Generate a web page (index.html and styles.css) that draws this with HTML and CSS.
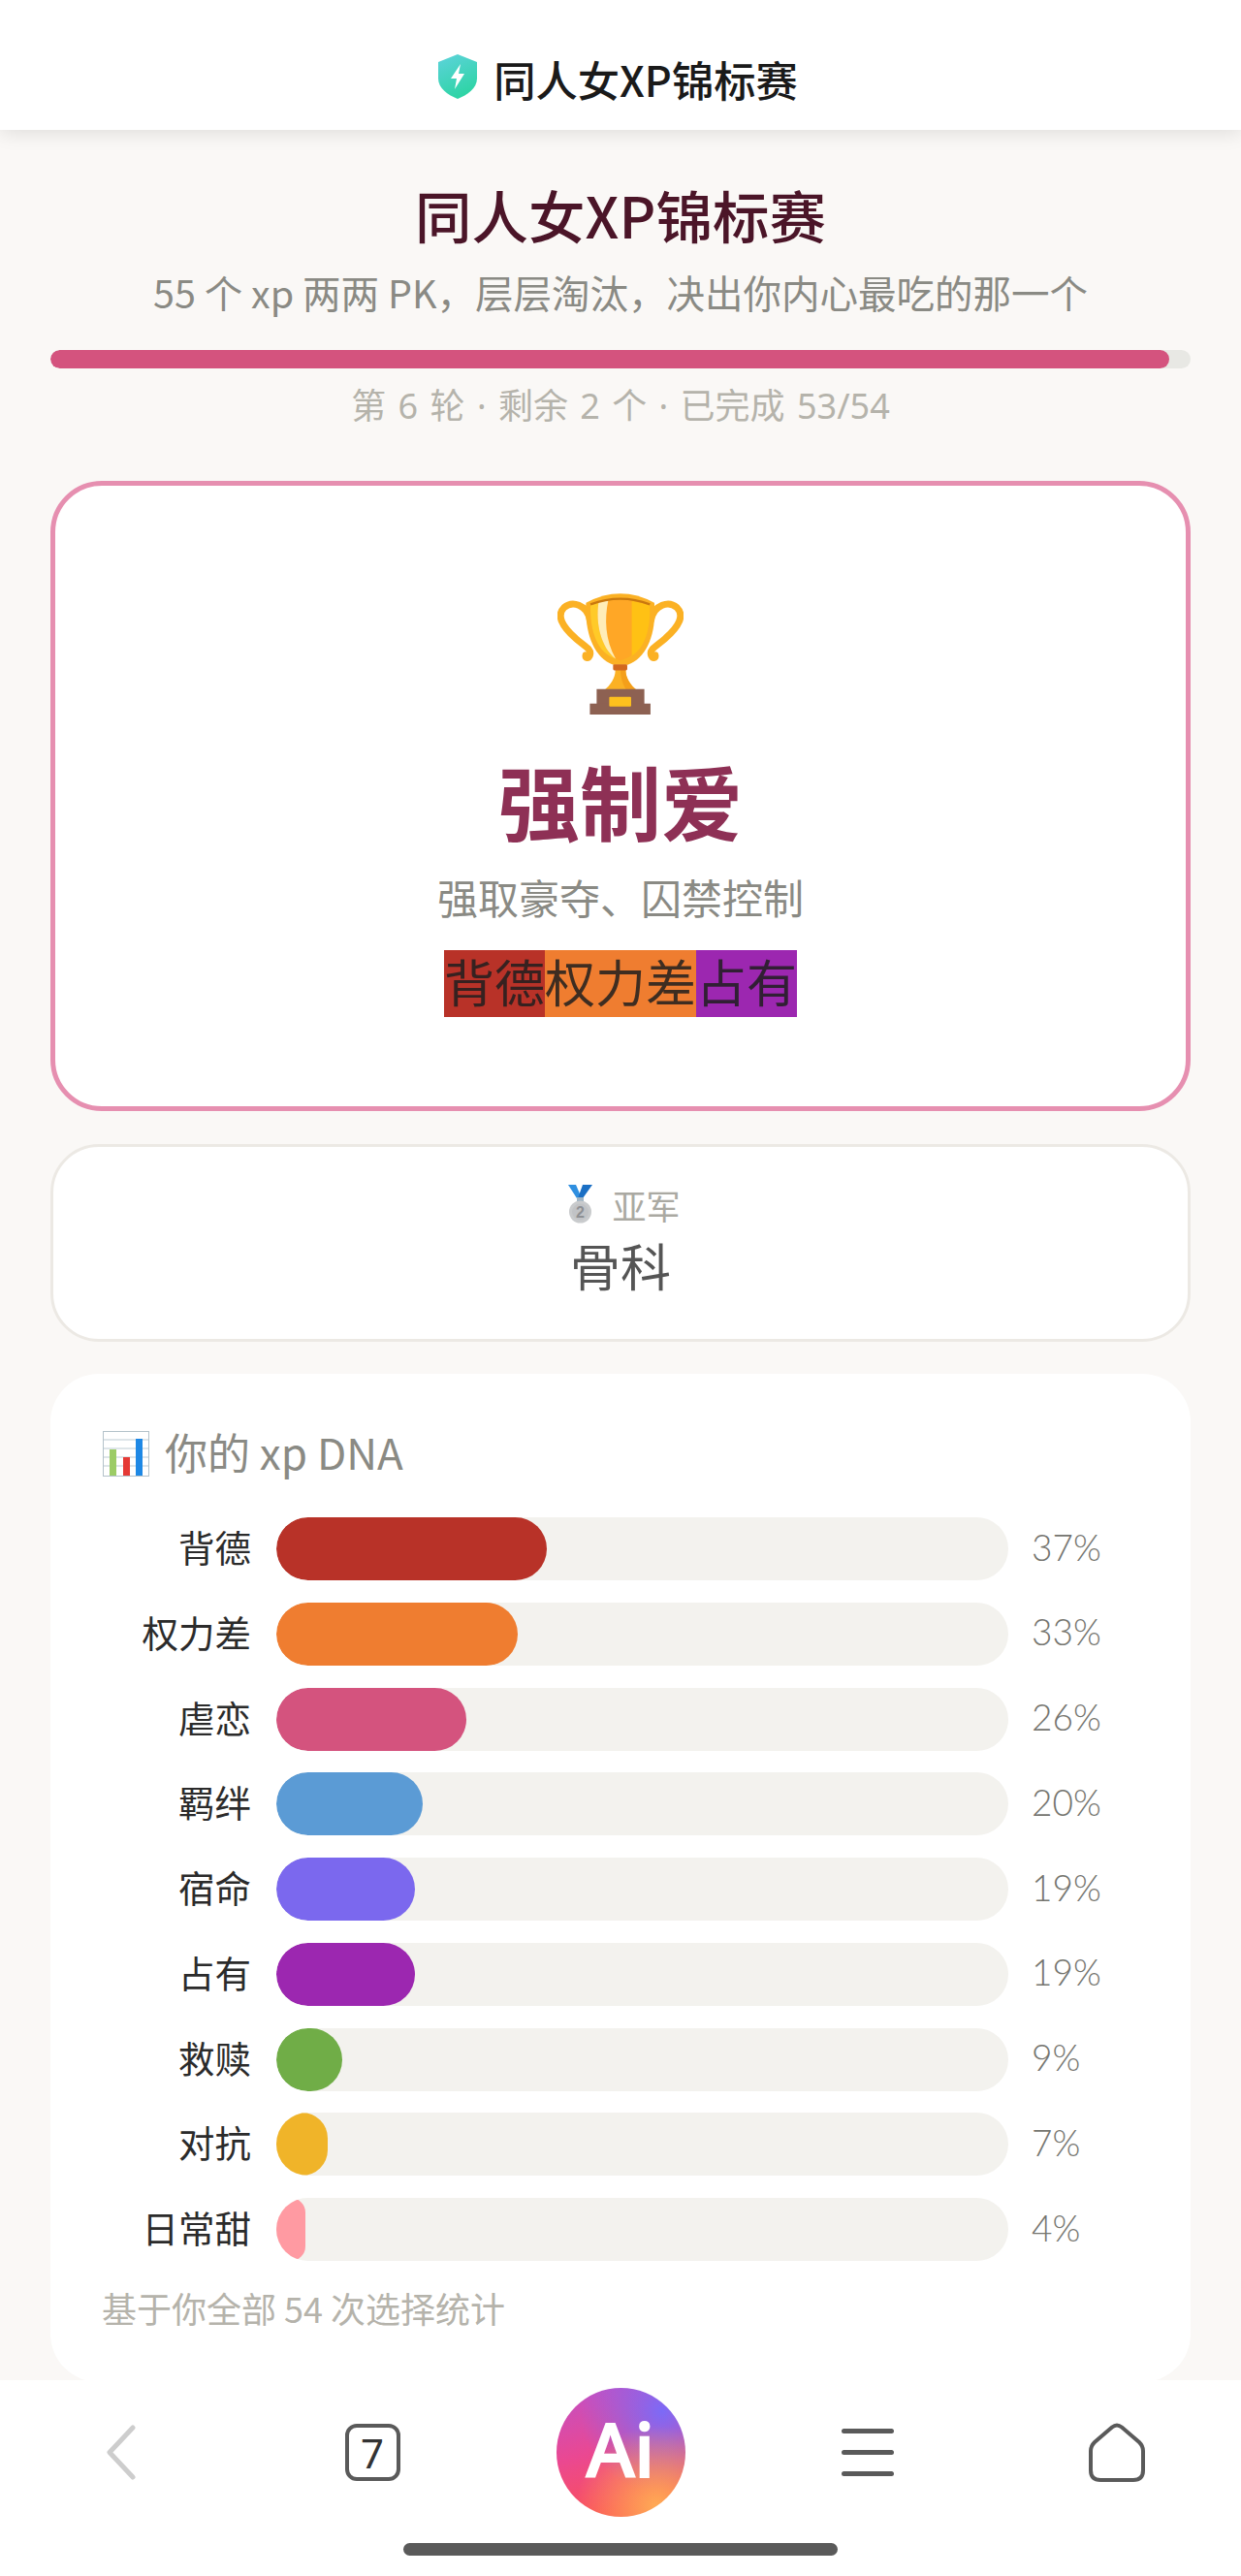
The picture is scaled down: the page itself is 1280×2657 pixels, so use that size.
FILE: index.html
```html
<!DOCTYPE html>
<html lang="zh-CN">
<head>
  <meta charset="UTF-8">
  <meta name="viewport" content="width=device-width, initial-scale=1.0">
  <title>同人女XP锦标赛</title>
  <link rel="stylesheet" href="styles.css">
</head>
<body>
  <header class="topbar">
    <svg class="shield" viewBox="0 0 40 46">
      <defs>
        <linearGradient id="shieldFill" x1="0" y1="0" x2="0.4" y2="1">
          <stop offset="0" stop-color="#5ed3dc"/>
          <stop offset="1" stop-color="#2fd4a6"/>
        </linearGradient>
      </defs>
      <path d="M20 0 L40 8 V25 C40 35 30 42 20 46 C10 42 0 35 0 25 V8 Z" fill="url(#shieldFill)"/>
      <path d="M23 10 L13 25 H19 L17 36 L27 20 H21 Z" fill="#fff"/>
    </svg>
    <span class="topbar-title">同人女XP锦标赛</span>
  </header>

  <main class="content">
    <h1 class="title">同人女XP锦标赛</h1>
    <p class="subtitle">55 个 xp 两两 PK，层层淘汰，决出你内心最吃的那一个</p>
    <div class="progress"><div class="progress-fill"></div></div>
    <p class="round">第 6 轮 · 剩余 2 个 · 已完成 53/54</p>

    <section class="winner">
      <svg class="trophy" viewBox="105 90 390 382">
        <path d="M205 178 C195 130 150 118 125 140 C100 165 120 200 160 235 C185 258 212 268 205 288 C200 300 190 298 192 288" fill="none" stroke="#fbb124" stroke-width="21" stroke-linecap="round"/>
        <path d="M395 178 C405 130 450 118 475 140 C500 165 480 200 440 235 C415 258 388 268 395 288 C400 300 410 298 408 288" fill="none" stroke="#fbb124" stroke-width="21" stroke-linecap="round"/>
        <path d="M193 125 Q300 68 405 125 C412 215 385 295 322 318 L278 318 C215 295 188 215 193 125 Z" fill="#fbb124"/>
        <path d="M207 133 Q300 100 391 133 C394 215 370 285 300 304 C230 285 204 215 207 133 Z" fill="#ffa726"/>
        <path d="M335 120 Q365 124 391 133 C394 205 376 265 335 290 Z" fill="#ffc114"/>
        <path d="M207 133 Q218 128 232 124 C222 190 240 265 285 299 C230 282 204 215 207 133 Z" fill="#ffca28"/>
        <path d="M232 124 Q245 120 262 118 C250 175 252 240 285 299 C240 265 222 190 232 124 Z" fill="#ffedb8"/>
        <path d="M207 130 Q300 96 391 130" fill="none" stroke="#c9780f" stroke-width="7"/>
        <path d="M284 334 C284 360 268 382 250 396 H350 C332 382 316 360 316 334 Z" fill="#fbb124"/>
        <path d="M300 334 H316 C316 360 332 382 350 396 H318 C308 380 300 360 300 334 Z" fill="#f49f1a"/>
        <rect x="277" y="316" width="44" height="19" rx="4" fill="#d2691e"/>
        <rect x="226" y="393" width="148" height="48" fill="#8d6152"/>
        <rect x="205" y="438" width="188" height="34" fill="#8d6152"/>
        <rect x="265" y="417" width="68" height="30" rx="3" fill="#fdc01e"/>
      </svg>
      <h2 class="winner-name">强制爱</h2>
      <p class="winner-desc">强取豪夺、囚禁控制</p>
      <div class="tags">
        <span class="tag tag-red">背德</span><span class="tag tag-orange">权力差</span><span class="tag tag-purple">占有</span>
      </div>
    </section>

    <section class="runner">
      <div class="runner-label">
        <svg class="medal" viewBox="0 0 25 40">
          <path d="M0 0 H8 L14 14 H9 Z" fill="#2f8fe0"/>
          <path d="M25 0 H15 L10 14 H15 Z" fill="#1b6fc4"/>
          <rect x="9" y="13" width="7" height="4" fill="#9fb4c4"/>
          <circle cx="12.5" cy="28" r="11.5" fill="#c9cbcd"/>
          <circle cx="12.5" cy="28" r="8.5" fill="#c1c3c6"/>
          <text x="12.5" y="34" class="medal-num">2</text>
        </svg>
        <span>亚军</span>
      </div>
      <div class="runner-name">骨科</div>
    </section>

    <section class="dna">
      <h3 class="dna-head">
        <svg class="chart" viewBox="0 0 48 47">
          <rect x="0.5" y="0.5" width="47" height="46" fill="#fff" stroke="#b4c2ca"/>
          <path d="M1 9 H47 M1 18 H47 M1 27 H47 M1 36 H47" stroke="#d3dde2" stroke-width="1.5"/>
          <rect x="7" y="19" width="7" height="27" fill="#9ccc65"/>
          <rect x="21" y="27" width="7" height="19" fill="#e53935"/>
          <rect x="34" y="8" width="7" height="38" fill="#1e88e5"/>
        </svg>
        <span>你的 xp DNA</span>
      </h3>
      <div class="rows">
        <div class="row"><span class="row-label">背德</span><div class="track"><div class="fill" style="width:37%;background:#b83228"></div></div><span class="row-pct">37%</span></div>
        <div class="row"><span class="row-label">权力差</span><div class="track"><div class="fill" style="width:33%;background:#ef7d30"></div></div><span class="row-pct">33%</span></div>
        <div class="row"><span class="row-label">虐恋</span><div class="track"><div class="fill" style="width:26%;background:#d4537e"></div></div><span class="row-pct">26%</span></div>
        <div class="row"><span class="row-label">羁绊</span><div class="track"><div class="fill" style="width:20%;background:#5b9bd5"></div></div><span class="row-pct">20%</span></div>
        <div class="row"><span class="row-label">宿命</span><div class="track"><div class="fill" style="width:19%;background:#7b68ee"></div></div><span class="row-pct">19%</span></div>
        <div class="row"><span class="row-label">占有</span><div class="track"><div class="fill" style="width:19%;background:#9c27b0"></div></div><span class="row-pct">19%</span></div>
        <div class="row"><span class="row-label">救赎</span><div class="track"><div class="fill" style="width:9%;background:#70ad47"></div></div><span class="row-pct">9%</span></div>
        <div class="row"><span class="row-label">对抗</span><div class="track"><div class="fill" style="width:7%;background:#f0b429"></div></div><span class="row-pct">7%</span></div>
        <div class="row"><span class="row-label">日常甜</span><div class="track"><div class="fill" style="width:4%;background:#ff9aa2"></div></div><span class="row-pct">4%</span></div>
      </div>
      <p class="dna-note">基于你全部 54 次选择统计</p>
    </section>
  </main>

  <nav class="bottombar">
    <div class="nav-icons">
      <svg class="nav-back" viewBox="0 0 30 57">
        <path d="M27 3 L3 28.5 L27 54" fill="none" stroke="#cdcdcd" stroke-width="5" stroke-linecap="round" stroke-linejoin="round"/>
      </svg>
      <div class="nav-tabs">7</div>
      <div class="nav-ai"><span class="nav-ai-text">Ai</span></div>
      <svg class="nav-menu" viewBox="0 0 54 49">
        <path d="M2.5 2.5 H51.5 M2.5 24.5 H51.5 M2.5 46.5 H51.5" stroke="#5a5a5a" stroke-width="5" stroke-linecap="round"/>
      </svg>
      <svg class="nav-home" viewBox="0 0 58 61">
        <path d="M24 4.5 Q29 0.5 34 4.5 L52 20 Q56 24 56 29 V49 Q56 59 46 59 H12 Q2 59 2 49 V29 Q2 24 6 20 Z" fill="none" stroke="#5a5a5a" stroke-width="4"/>
      </svg>
    </div>
    <div class="home-indicator"></div>
  </nav>
</body>
</html>
```

FILE: styles.css
```css
* {
  box-sizing: border-box;
}

html, body {
  height: 100%;
}

body {
  margin: 0;
  display: flex;
  flex-direction: column;
  overflow: hidden;
  background-color: #faf8f6;
  font-family: "Noto Sans CJK SC", "Noto Sans", sans-serif;
}

h1, h2, h3, p {
  margin: 0;
  font-weight: 400;
}

/* top bar */
.topbar {
  flex: none;
  height: 134px;
  padding: 28px 5px 0 0;
  display: flex;
  align-items: center;
  justify-content: center;
  gap: 17px;
  background-color: #fff;
  box-shadow: 0 2px 20px rgba(0, 0, 0, 0.12);
  position: relative;
  z-index: 1;
}

.shield {
  width: 40px;
  height: 46px;
  margin-top: -5px;
}

.topbar-title {
  font-size: 43.3px;
  font-weight: 500;
  color: #1a1a1a;
}

/* page */
.content {
  flex: 1;
  min-height: 0;
  overflow: hidden;
  padding: 47px 52px 0;
}

.title {
  font-size: 58.5px;
  line-height: 80px;
  font-weight: 500;
  text-align: center;
  color: #4b1528;
}

.subtitle {
  margin-top: 12px;
  font-size: 39.5px;
  line-height: 56px;
  text-align: center;
  color: #8a8a84;
}

.progress {
  margin-top: 32px;
  height: 19px;
  border-radius: 10px;
  background-color: #e8e8e4;
  overflow: hidden;
}

.progress-fill {
  width: 98.15%;
  height: 100%;
  border-radius: 10px;
  background-color: #d4537e;
}

.round {
  margin-top: 11px;
  font-family: "Noto Sans", "Noto Sans CJK SC", sans-serif;
  font-size: 36px;
  line-height: 56px;
  word-spacing: 3px;
  text-align: center;
  color: #b5b3ab;
}

/* champion card */
.winner {
  margin-top: 49px;
  padding: 109px 0 92px;
  display: flex;
  flex-direction: column;
  align-items: center;
  background-color: #fff;
  border: 5px solid #e68fb0;
  border-radius: 53px;
}

.trophy {
  width: 130px;
  height: 127px;
}

.winner-name {
  margin-top: 38px;
  font-size: 84px;
  line-height: 100px;
  font-weight: 700;
  color: #8e3055;
}

.winner-desc {
  margin-top: 25px;
  font-size: 42px;
  line-height: 50px;
  color: #8a8a84;
}

.tags {
  margin-top: 30px;
  display: flex;
}

.tag {
  height: 69px;
  font-size: 52px;
  line-height: 64px;
  color: rgba(30, 30, 30, 0.85);
}

.tag-red { background-color: #b83228; }
.tag-orange { background-color: #ef7d30; }
.tag-purple { background-color: #9c27b0; }

/* runner up card */
.runner {
  margin-top: 34px;
  padding: 36px 0 44px;
  background-color: #fff;
  border: 3px solid #ece9e4;
  border-radius: 50px;
  text-align: center;
}

.runner-label {
  height: 46px;
  padding-left: 8px;
  display: flex;
  align-items: center;
  justify-content: center;
  gap: 20px;
  font-size: 35px;
  color: #aaa9a2;
}

.medal {
  width: 25px;
  height: 40px;
}

.medal-num {
  font-family: "Liberation Sans", sans-serif;
  font-size: 16px;
  font-weight: 700;
  text-anchor: middle;
  fill: #8e9094;
}

.runner-name {
  margin-top: 8px;
  font-size: 52px;
  line-height: 64px;
  color: #555;
}

/* dna card */
.dna {
  margin-top: 33px;
  padding: 52px 53px 52px;
  background-color: #fff;
  border-radius: 50px;
}

.dna-head {
  height: 60px;
  padding-bottom: 4px;
  display: flex;
  align-items: center;
  gap: 16px;
  font-size: 44px;
  color: #8a8a84;
}

.chart {
  width: 48px;
  height: 47px;
  margin-top: 4px;
  margin-left: 1px;
}

.rows {
  margin-top: 36px;
  display: flex;
  flex-direction: column;
  gap: 22.75px;
}

.row {
  display: grid;
  grid-template-columns: 153px 1fr 109px;
  column-gap: 27px;
  align-items: center;
  margin-right: -1px;
}

.row-label {
  margin-right: -1px;
  padding-bottom: 6px;
  font-size: 37.5px;
  text-align: right;
  color: #2b2b2b;
}

.track {
  height: 65px;
  border-radius: 32.5px;
  background-color: #f3f2ee;
  overflow: hidden;
}

.fill {
  height: 100%;
  border-radius: 32.5px;
}

.row-pct {
  margin-left: -3px;
  padding-bottom: 5px;
  font-family: Lato, sans-serif;
  font-size: 37px;
  font-weight: 300;
  color: #75756f;
}

.dna-note {
  margin-top: 23px;
  font-size: 36px;
  line-height: 50px;
  color: #b5b3ab;
}

/* browser bottom bar */
.bottombar {
  flex: none;
  height: 202px;
  padding-top: 8px;
  background-color: #fff;
  display: flex;
  flex-direction: column;
  align-items: center;
  position: relative;
  z-index: 1;
}

.nav-icons {
  width: 100%;
  height: 133px;
  display: grid;
  grid-template-columns: repeat(5, 1fr);
  align-items: center;
  justify-items: center;
}

.nav-back {
  width: 30px;
  height: 57px;
  margin-right: 6px;
}

.nav-tabs {
  width: 57px;
  height: 59px;
  border: 4px solid #5a5a5a;
  border-radius: 12px;
  display: flex;
  align-items: center;
  justify-content: center;
  font-family: "Noto Sans", sans-serif;
  font-size: 42px;
  color: #333;
}

.nav-ai {
  width: 133px;
  height: 133px;
  border-radius: 50%;
  display: flex;
  align-items: center;
  justify-content: center;
  background:
    radial-gradient(circle at 78% 92%, #ffab55 0, rgba(255, 171, 85, 0) 52%),
    radial-gradient(circle at 82% 18%, #7c6af7 0, rgba(124, 106, 247, 0) 55%),
    linear-gradient(165deg, #c050c8 0%, #ea4892 45%, #fb4f58 85%);
}

.nav-ai-text {
  margin-top: -8px;
  font-family: "Noto Sans", sans-serif;
  font-size: 76px;
  line-height: 1;
  font-weight: 500;
  color: #fff;
  -webkit-text-stroke: 2px #fff;
}

.nav-menu {
  width: 54px;
  height: 49px;
  margin-right: 2px;
}

.nav-home {
  width: 58px;
  height: 61px;
}

.home-indicator {
  margin-top: 27px;
  width: 448px;
  height: 13px;
  border-radius: 7px;
  background-color: #5a5a5a;
}
```
